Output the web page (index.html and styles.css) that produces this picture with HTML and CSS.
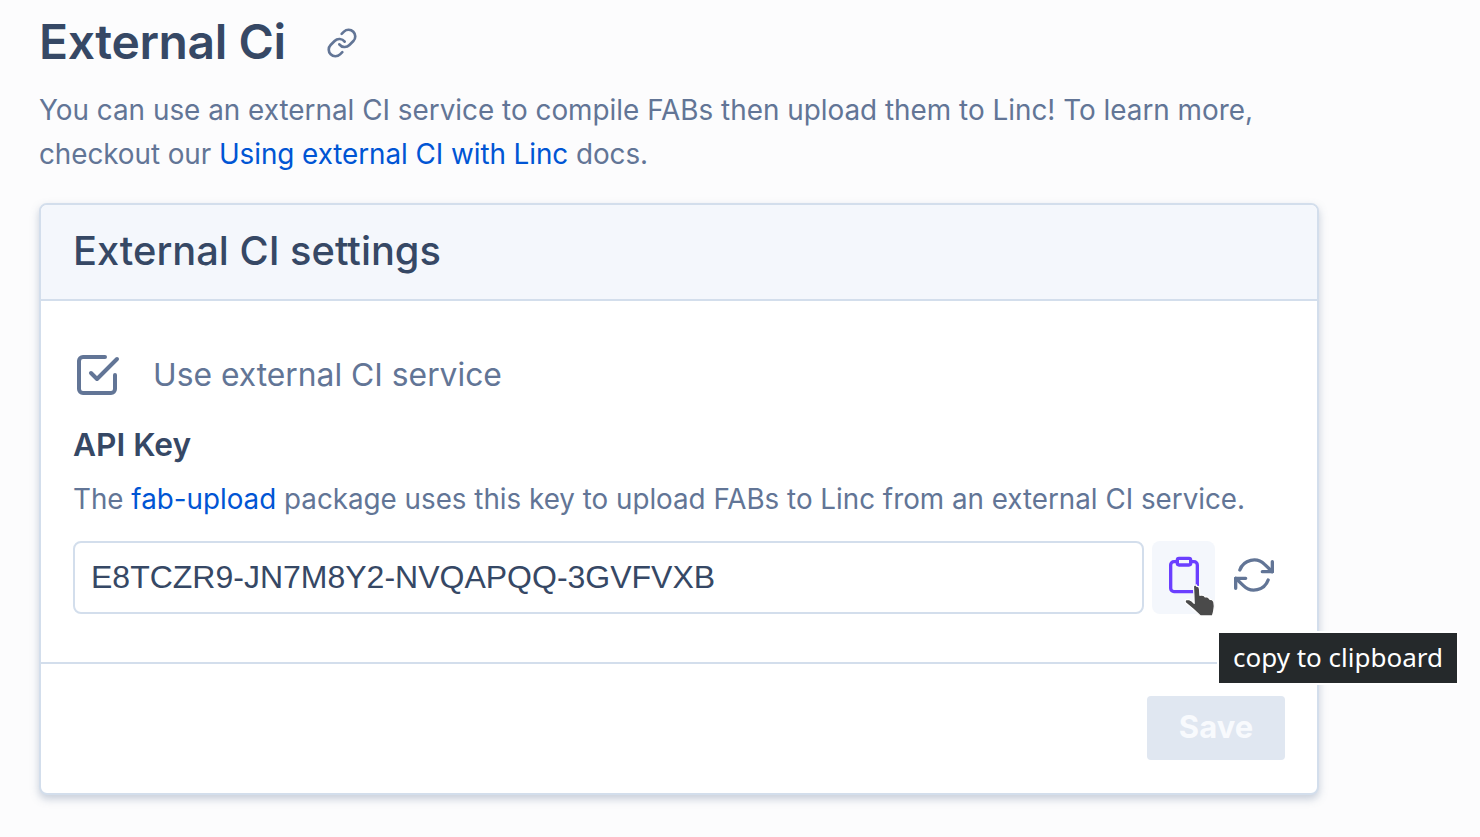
FILE: index.html
```html
<!DOCTYPE html>
<html lang="en">
<head>
<meta charset="utf-8">
<title>External Ci</title>
<link rel="stylesheet" href="styles.css">
</head>
<body>
<main class="page">
  <div class="title-row">
    <h1 class="title">External Ci</h1>
    <svg class="link-icon" viewBox="0 0 24 24" fill="none" stroke="currentColor" stroke-width="2" stroke-linecap="round" stroke-linejoin="round"><path d="M10 13a5 5 0 0 0 7.54.54l3-3a5 5 0 0 0-7.07-7.07l-1.72 1.71"/><path d="M14 11a5 5 0 0 0-7.54-.54l-3 3a5 5 0 0 0 7.07 7.07l1.71-1.71"/></svg>
  </div>
  <p class="intro">You can use an external CI service to compile FABs then upload them to Linc! To learn more, <span class="intro-tail">checkout our <a href="#">Using external CI with Linc</a> docs.</span></p>
  <section class="card">
    <header class="card-head"><h2>External CI settings</h2></header>
    <div class="card-body">
      <div class="check-row">
        <svg class="check-icon" viewBox="0 0 24 24" fill="none" stroke="currentColor" stroke-width="2" stroke-linecap="round" stroke-linejoin="round"><polyline points="9 11 12 14 22 4"/><path d="M21 12v7a2 2 0 0 1-2 2H5a2 2 0 0 1-2-2V5a2 2 0 0 1 2-2h11"/></svg>
        <span class="check-label">Use external CI service</span>
      </div>
      <h3 class="key-title">API Key</h3>
      <p class="key-desc">The <a href="#">fab-upload</a> package uses this key to upload FABs to Linc from an external CI service.</p>
      <div class="key-row">
        <input class="key-input" type="text" value="E8TCZR9-JN7M8Y2-NVQAPQQ-3GVFVXB" readonly>
        <button class="icon-btn copy" type="button">
          <svg class="glyph" viewBox="0 0 24 24" fill="none" stroke="currentColor" stroke-width="2" stroke-linecap="round" stroke-linejoin="round"><path d="M16 4h2a2 2 0 0 1 2 2v14a2 2 0 0 1-2 2H6a2 2 0 0 1-2-2V6a2 2 0 0 1 2-2h2"/><rect x="8" y="2" width="8" height="4" rx="1" ry="1"/></svg>
          <svg class="hand" viewBox="0 0 40 40"><path d="M16.500 4.200c1.700 0 2.900 1 3 2.700l.4 6.400 1.300-.3 2.900.6 1 1.300 2.100-.2 1.900 1.500.9 1.200 2.100.2 1.700 2 .5 4.500-.6 5-1.300 4.800H20.500L13 27l-7.500-6.300-.4-1.700 1-1.300 2.700-.3 3 1.600 2.400 2.400-.3-8.400-.4-7.900c-.1-1.700 1.100-2.300 2.900-2.300z" fill="#4a4a4a" stroke="#fff" stroke-width="1.200" stroke-linejoin="round"/></svg>
        </button>
        <button class="icon-btn refresh" type="button">
          <svg class="glyph" viewBox="0 0 24 24" fill="none" stroke="currentColor" stroke-width="2" stroke-linecap="round" stroke-linejoin="round"><polyline points="23 4 23 10 17 10"/><polyline points="1 20 1 14 7 14"/><path d="M3.510 9a9 9 0 0 1 14.850-3.360L23 10M1 14l4.640 4.360A9 9 0 0 0 20.490 15"/></svg>
        </button>
      </div>
    </div>
    <footer class="card-foot"><button class="save" type="button" disabled>Save</button></footer>
  </section>
</main>
<div class="tooltip">copy to clipboard</div>
</body>
</html>
```

FILE: styles.css
```css
* { box-sizing: border-box; }
html, body { margin: 0; height: 100%; }
body {
  background: #fcfcfd;
  font-family: Inter, "Liberation Sans", sans-serif;
  color: #627596;
  overflow: hidden;
  position: relative;
}
.page { width: 1319px; padding: 12px 0 0 39px; }
.title-row { display: flex; align-items: center; gap: 40px; height: 60px; }
.title { margin: 0; font-size: 48px; line-height: 60px; font-weight: 600; color: #364865; letter-spacing: -.4px; }
.link-icon { width: 32px; height: 32px; color: #627596; margin-top: 2px; }
.intro { margin: 16px 0 0; font-size: 27.86px; line-height: 44px; width: 1278px; }
.intro-tail { letter-spacing: -.07px; }
a { color: #0055d4; text-decoration: none; }
.card {
  margin-top: 27px;
  background: #fff;
  border: 2px solid #d3deec;
  border-radius: 8px;
  box-shadow: 0 4px 8px rgba(98, 117, 150, .34);
}
.card-head {
  background: #f4f7fc;
  border-bottom: 2px solid #d3deec;
  border-radius: 6px 6px 0 0;
  padding: 0 32px 4px;
  height: 96px;
  display: flex;
  align-items: center;
}
.card-head h2 { margin: 0; font-size: 39.8px; font-weight: 500; color: #364865; }
.card-body { padding: 50px 32px 48px; border-bottom: 2px solid #d3deec; }
.check-row { display: flex; align-items: center; gap: 32px; height: 48px; font-size: 31.8px; }
.check-label { margin-top: -2px; }
.check-icon { width: 48px; height: 48px; color: #627596; flex: none; }
.key-title { margin: 24px 0 0; font-size: 31.7px; line-height: 44px; font-weight: 600; color: #364865; }
.key-desc { margin: 10px 0 0; font-size: 27.77px; line-height: 44px; }
.key-row { display: flex; align-items: center; margin-top: 20px; height: 73px; }
.key-input {
  width: 1073px;
  height: 73px;
  border: 2px solid #d3deec;
  border-radius: 8px;
  padding: 0 16px;
  font: 32px "Liberation Sans", Arial, sans-serif;
  color: #364865;
  background: #fff;
  outline: none;
}
.icon-btn {
  border: 0;
  padding: 0 0 5px;
  background: none;
  display: flex;
  align-items: center;
  justify-content: center;
  position: relative;
  height: 73px;
}
.glyph { width: 40px; height: 40px; }
.copy { width: 63px; margin-left: 8px; background: #f4f7fc; border-radius: 8px; color: #6b3fff; margin-right: 7px; }
.refresh { width: 63px; color: #627596; }
.hand { position: absolute; left: 28px; top: 41px; width: 40px; height: 40px; }
.card-foot { display: flex; justify-content: flex-end; padding: 32px; height: 129px; }
.save {
  width: 138px;
  height: 64px;
  border: 0;
  border-radius: 4px;
  background: #e0e7f1;
  color: #f8fafd;
  font: 700 31px Inter, sans-serif;
  padding: 0 0 3px;
}
.tooltip {
  position: absolute;
  left: 1217px;
  top: 631px;
  width: 242px;
  height: 54px;
  border: 2px solid #fff;
  background: #25292b;
  color: #fff;
  font: 26px/48px "Noto Sans", sans-serif;
  padding-left: 14px;
  white-space: nowrap;
}
```
